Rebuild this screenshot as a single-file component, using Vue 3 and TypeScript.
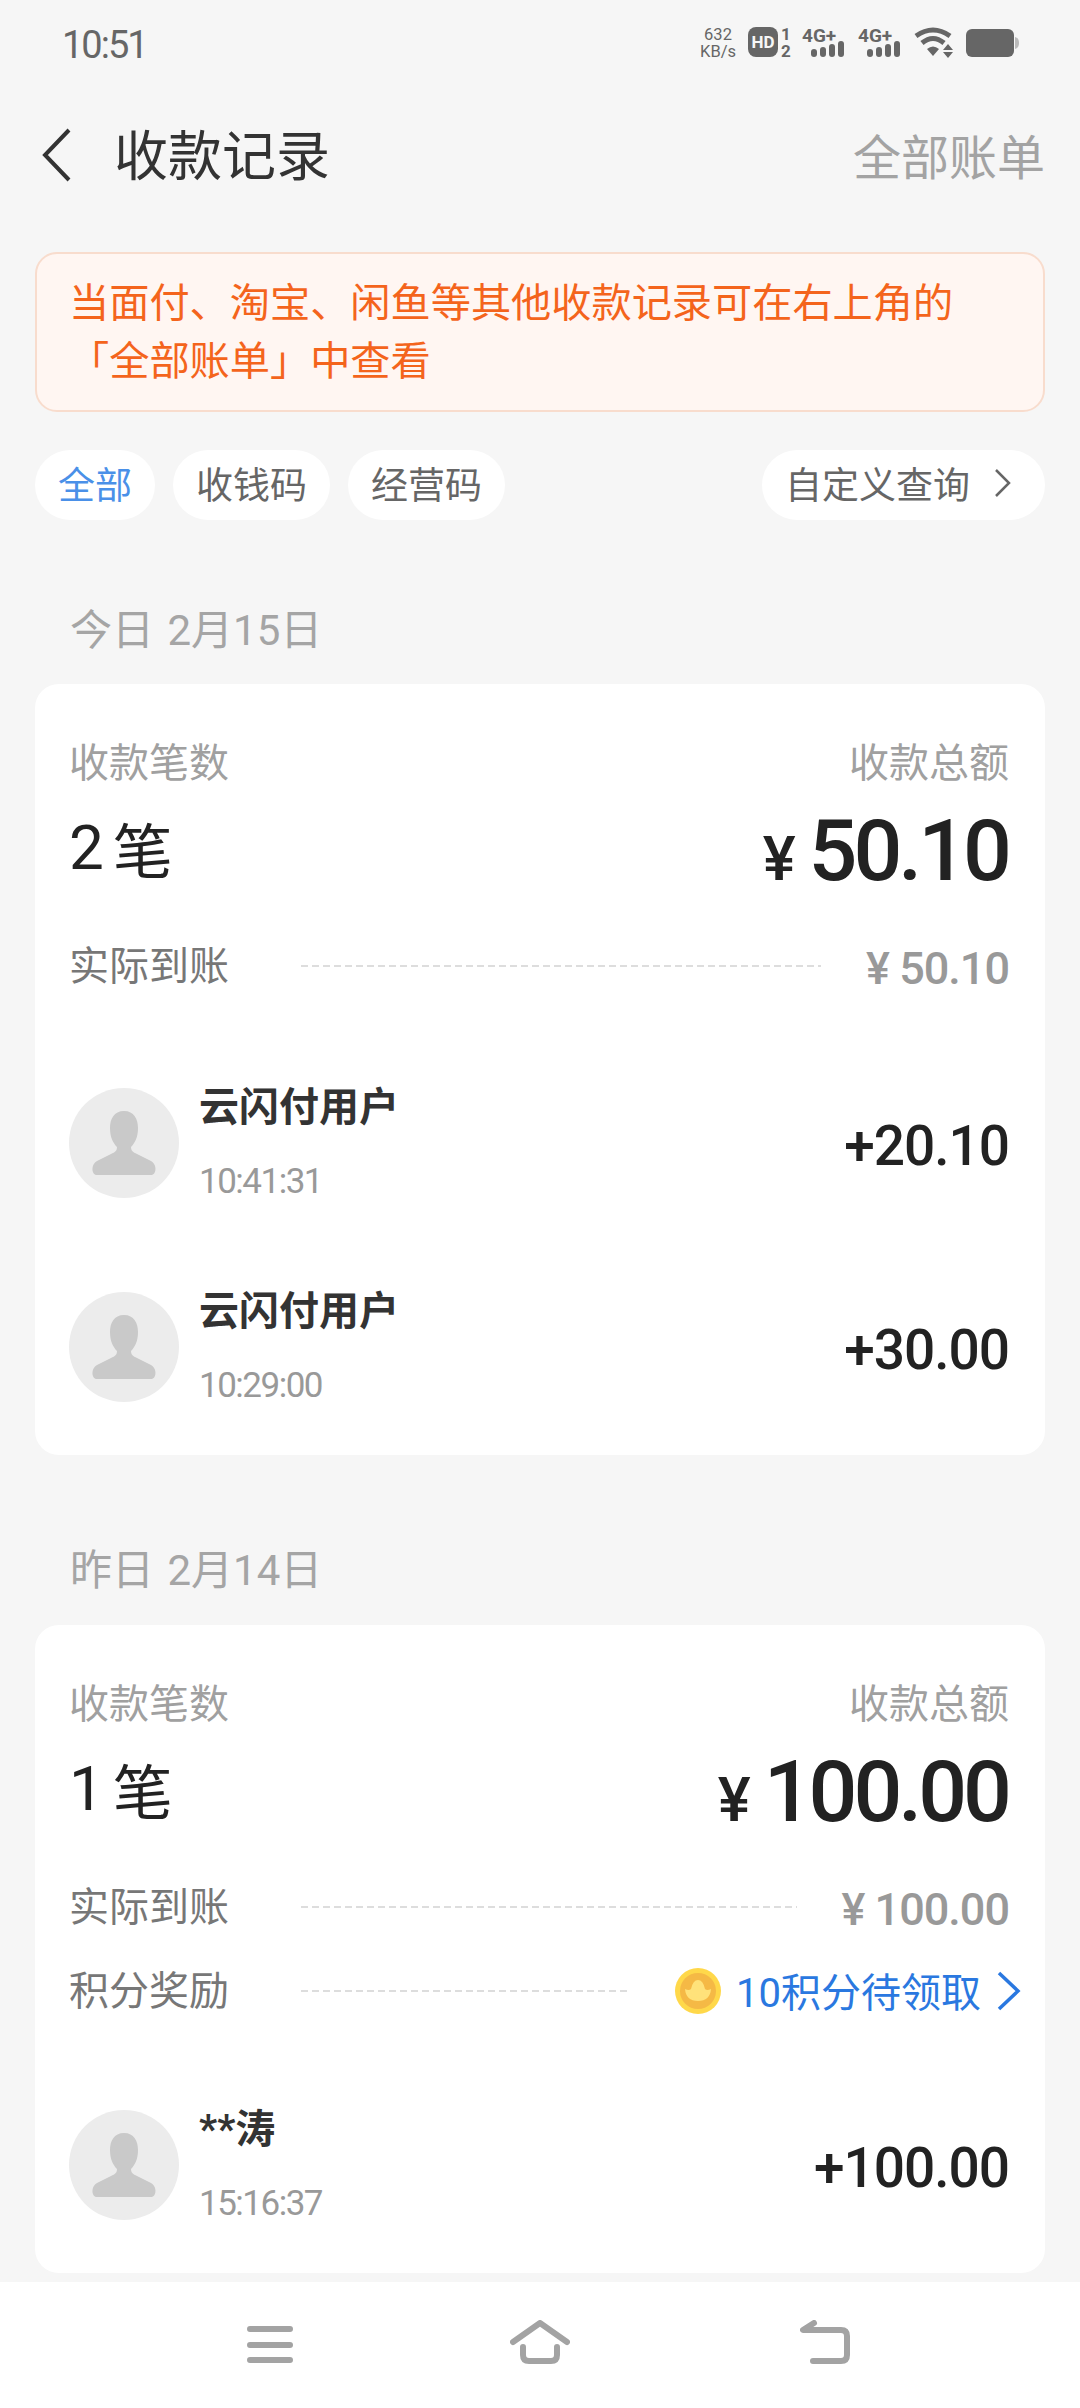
<script setup lang="ts">
interface Payment {
  name: string
  time: string
  amount: string
}

interface DayGroup {
  date: string
  count: string
  total: string
  received: string
  points?: string
  payments: Payment[]
}

const chips = ['全部', '收钱码', '经营码']

const days: DayGroup[] = [
  {
    date: '今日 2月15日',
    count: '2',
    total: '50.10',
    received: '50.10',
    payments: [
      { name: '云闪付用户', time: '10:41:31', amount: '+20.10' },
      { name: '云闪付用户', time: '10:29:00', amount: '+30.00' },
    ],
  },
  {
    date: '昨日 2月14日',
    count: '1',
    total: '100.00',
    received: '100.00',
    points: '10积分待领取',
    payments: [{ name: '**涛', time: '15:16:37', amount: '+100.00' }],
  },
]
</script>

<template>
  <div class="page">
    <div class="content">
      <div class="status">
        <span class="clock">10:51</span>
        <div class="status-icons">
          <div class="speed"><span>632</span><span>KB/s</span></div>
          <svg class="hd" width="44" height="40" viewBox="0 0 44 40">
            <rect y="4" width="30" height="30" rx="8" fill="#666" />
            <text x="15" y="25" text-anchor="middle" class="hd-text">HD</text>
            <text x="38" y="17" text-anchor="middle" class="sim-text">1</text>
            <text x="38" y="34" text-anchor="middle" class="sim-text">2</text>
          </svg>
          <svg v-for="n in 2" :key="n" class="signal" width="46" height="44" viewBox="0 0 46 44">
            <text x="0" y="21" class="net-text">4G+</text>
            <rect x="9" y="28" width="6" height="8" rx="3" fill="#666" />
            <rect x="18" y="26" width="6" height="10" rx="3" fill="#666" />
            <rect x="27" y="23" width="6" height="13" rx="3" fill="#666" />
            <rect x="36" y="20" width="6" height="16" rx="3" fill="#666" />
          </svg>
          <svg class="wifi" width="42" height="32" viewBox="0 0 42 32">
            <path d="M2 9 Q19 -3 36 9" fill="none" stroke="#666" stroke-width="5" />
            <path d="M8 16 Q19 7 30 16" fill="none" stroke="#666" stroke-width="5" />
            <path d="M13 22 Q19 17 25 22 L19 29 Z" fill="#666" />
            <path d="M34 17 L39 23 L29 23 Z M29 25 L39 25 L34 31 Z" fill="#666" />
          </svg>
          <svg class="battery" width="54" height="28" viewBox="0 0 54 28">
            <rect width="48" height="28" rx="6" fill="#666" />
            <path d="M49 8 Q53 9 53 14 Q53 19 49 20 Z" fill="#bbb" />
          </svg>
        </div>
      </div>

      <header class="header">
        <svg class="back" width="30" height="54" viewBox="0 0 30 54">
          <path d="M28 2 L4 27 L28 52" fill="none" stroke="#333" stroke-width="4" />
        </svg>
        <h1 class="title">收款记录</h1>
        <span class="all-bills">全部账单</span>
      </header>

      <div class="notice">当面付、淘宝、闲鱼等其他收款记录可在右上角的<br />「全部账单」中查看</div>

      <div class="chips">
        <span v-for="(chip, i) in chips" :key="chip" class="chip" :class="{ active: i === 0 }">{{ chip }}</span>
        <span class="chip query">
          自定义查询
          <svg width="18" height="30" viewBox="0 0 18 30">
            <path d="M2 2 L15 15 L2 28" fill="none" stroke="#666" stroke-width="2.5" />
          </svg>
        </span>
      </div>

      <section v-for="day in days" :key="day.date" class="day">
        <div class="date">{{ day.date }}</div>
        <div class="card">
          <div class="labels">
            <span>收款笔数</span>
            <span>收款总额</span>
          </div>
          <div class="totals">
            <div class="count"><span class="count-num">{{ day.count }}</span>笔</div>
            <div class="total"><span class="total-yen">¥</span>{{ day.total }}</div>
          </div>
          <div class="detail">
            <span class="detail-label">实际到账</span>
            <i class="dash"></i>
            <span class="detail-value">¥ {{ day.received }}</span>
          </div>
          <div v-if="day.points" class="detail">
            <span class="detail-label">积分奖励</span>
            <i class="dash"></i>
            <svg class="coin" width="46" height="46" viewBox="0 0 46 46">
              <circle cx="23" cy="23" r="23" fill="#ffd84a" />
              <circle cx="23" cy="23" r="18" fill="#f5b945" />
              <path d="M10 21 Q14 23 16 21 Q18 12 23 12 Q28 12 30 21 Q32 23 36 21 Q35 33 23 33 Q11 33 10 21 Z" fill="#ffe27a" />
            </svg>
            <span class="points">{{ day.points }}</span>
            <svg class="points-arrow" width="24" height="40" viewBox="0 0 24 40">
              <path d="M2 2 L21 20 L2 38" fill="none" stroke="#2a78e0" stroke-width="3.5" />
            </svg>
          </div>
          <div class="payments">
            <div v-for="p in day.payments" :key="p.time" class="payment">
              <div class="avatar">
                <svg width="66" height="64" viewBox="0 0 66 64">
                  <path d="M33 0 C23 0 19 8 19 17 C19 26 22 32 26 36 C26 40 24 41 20 43 L6 50 C0 53 0 64 6 64 L60 64 C66 64 66 53 60 50 L46 43 C42 41 40 40 40 36 C44 32 47 26 47 17 C47 8 43 0 33 0 Z" fill="#c9c9c9" />
                </svg>
              </div>
              <div class="who">
                <span class="name">{{ p.name }}</span>
                <span class="time">{{ p.time }}</span>
              </div>
              <span class="amount">{{ p.amount }}</span>
            </div>
          </div>
        </div>
      </section>
    </div>

    <nav class="nav">
      <svg width="46" height="38" viewBox="0 0 46 38">
        <path d="M3 3 H43 M3 19 H43 M3 34 H43" fill="none" stroke="#a3a3a3" stroke-width="6" stroke-linecap="round" />
      </svg>
      <svg class="nav-home" width="60" height="44" viewBox="0 0 60 44">
        <path d="M3 22 L30 3 L57 22" fill="none" stroke="#a3a3a3" stroke-width="6" stroke-linecap="round" stroke-linejoin="round" />
        <path d="M13 27 V35 Q13 41 19 41 H41 Q47 41 47 35 V27" fill="none" stroke="#a3a3a3" stroke-width="6" stroke-linecap="round" />
      </svg>
      <svg class="nav-back" width="50" height="44" viewBox="0 0 50 44">
        <path d="M14 3 L3 10 H41 Q47 10 47 16 V35 Q47 41 41 41 H13" fill="none" stroke="#a3a3a3" stroke-width="6" stroke-linecap="round" stroke-linejoin="round" />
      </svg>
    </nav>
  </div>
</template>

<style>
html,
body {
  margin: 0;
  background: #f6f6f6;
}
</style>

<style scoped>
.page {
  width: 1080px;
  height: 2408px;
  display: flex;
  flex-direction: column;
  overflow: hidden;
  background: #f6f6f6;
  font-family: "Roboto", "Noto Sans CJK SC", sans-serif;
  color: #222;
}

.content {
  flex: 1;
  min-height: 0;
}

.status {
  height: 86px;
  box-sizing: border-box;
  padding: 0 60px 0 62px;
  display: flex;
  align-items: center;
  justify-content: space-between;
}

.clock {
  margin-top: 3px;
  font-size: 38px;
  color: #666;
  letter-spacing: -2px;
}

.status-icons {
  display: flex;
  align-items: center;
  gap: 10px;
}

.speed {
  display: flex;
  flex-direction: column;
  align-items: center;
  font-size: 16.5px;
  line-height: 17px;
  color: #666;
  margin-right: 2px;
}

.hd-text,
.sim-text,
.net-text {
  font-family: "Roboto", sans-serif;
  font-weight: 700;
  fill: #666;
}

.hd-text {
  font-size: 17px;
  fill: #f6f6f6;
}

.sim-text {
  font-size: 17px;
}

.net-text {
  font-size: 19px;
}

.header {
  height: 138px;
  display: flex;
  align-items: center;
  padding: 0 35px 0 41px;
}

.title {
  margin: 0 0 6px 43px;
  font-size: 54px;
  font-weight: 400;
  color: #333;
}

.all-bills {
  margin: 0 0 2px auto;
  font-size: 48px;
  color: #a3a3a3;
}

.notice {
  margin: 28px 35px 0;
  height: 160px;
  box-sizing: border-box;
  padding: 21px 32px 0;
  background: #fff6f2;
  border: 2px solid #f8dccd;
  border-radius: 22px;
  font-size: 40.2px;
  line-height: 58px;
  color: #f4641c;
}

.chips {
  margin: 38px 35px 0;
  display: flex;
  gap: 18px;
}

.chip {
  height: 70px;
  box-sizing: border-box;
  padding: 0 23px 4px;
  display: flex;
  align-items: center;
  background: #fff;
  border-radius: 35px;
  font-size: 37px;
  color: #666;
}

.chip.active {
  color: #4a90e8;
}

.query {
  margin-left: auto;
  gap: 24px;
  padding-right: 33px;
}

.date {
  padding: 81px 70px 23px;
  font-size: 42px;
  line-height: 60px;
  word-spacing: 3px;
  color: #a5a5a5;
}

.day + .day .date {
  padding-top: 86px;
  padding-bottom: 24px;
}

.card {
  margin: 0 35px;
  padding: 50px 36px 6px 34px;
  background: #fff;
  border-radius: 24px;
}

.labels {
  display: flex;
  justify-content: space-between;
  font-size: 40px;
  line-height: 60px;
  color: #a0a0a0;
}

.totals {
  height: 113px;
  margin-bottom: 17px;
  display: flex;
  align-items: center;
  justify-content: space-between;
}

.count {
  display: flex;
  align-items: center;
  margin-bottom: 6px;
  font-size: 60px;
  color: #222;
}

.count-num {
  font-size: 62px;
  margin-right: 9px;
}

.total {
  display: flex;
  align-items: baseline;
  margin-right: 1px;
  font-size: 86px;
  font-weight: 500;
  letter-spacing: -4px;
  color: #222;
}

.total-yen {
  font-size: 62px;
  margin-right: 13px;
  letter-spacing: 0;
}

.detail {
  height: 84px;
  display: flex;
  align-items: center;
}

.detail-label {
  margin-bottom: 6px;
  font-size: 40px;
  color: #777;
}

.dash {
  flex: 1;
  height: 2px;
  margin: 0 45px 0 72px;
  background: repeating-linear-gradient(90deg, #ddd 0 7px, transparent 7px 11px);
}

.detail-value {
  margin-top: 4px;
  font-size: 45px;
  font-weight: 500;
  letter-spacing: -1px;
  color: #999;
}

.points {
  margin: 0 0 2px 15px;
  font-size: 40px;
  color: #2a78e0;
}

.points-arrow {
  margin: 0 -12px 0 16px;
}

.payments {
  margin-top: 33px;
}

.detail + .detail + .payments {
  margin-top: 30px;
}

.payment {
  height: 204px;
  display: flex;
  align-items: center;
}

.avatar {
  width: 110px;
  height: 110px;
  border-radius: 50%;
  background: #ececec;
  display: flex;
  align-items: center;
  justify-content: center;
}

.who {
  margin-left: 20px;
  display: flex;
  flex-direction: column;
  gap: 21px;
}

.name {
  margin-top: 2px;
  font-size: 40px;
  line-height: 54px;
  font-weight: 700;
  color: #333;
}

.time {
  font-size: 35px;
  line-height: 52px;
  letter-spacing: -1.5px;
  color: #999;
}

.amount {
  margin: 5px 0 0 auto;
  font-size: 55px;
  font-weight: 500;
  letter-spacing: -1px;
  color: #222;
}

.nav {
  height: 126px;
  flex: none;
  box-sizing: border-box;
  padding-left: 247px;
  display: flex;
  align-items: center;
  background: #fff;
}

.nav-home {
  margin: 0 0 6px 217px;
}

.nav-back {
  margin: 0 0 6px 230px;
}
</style>
